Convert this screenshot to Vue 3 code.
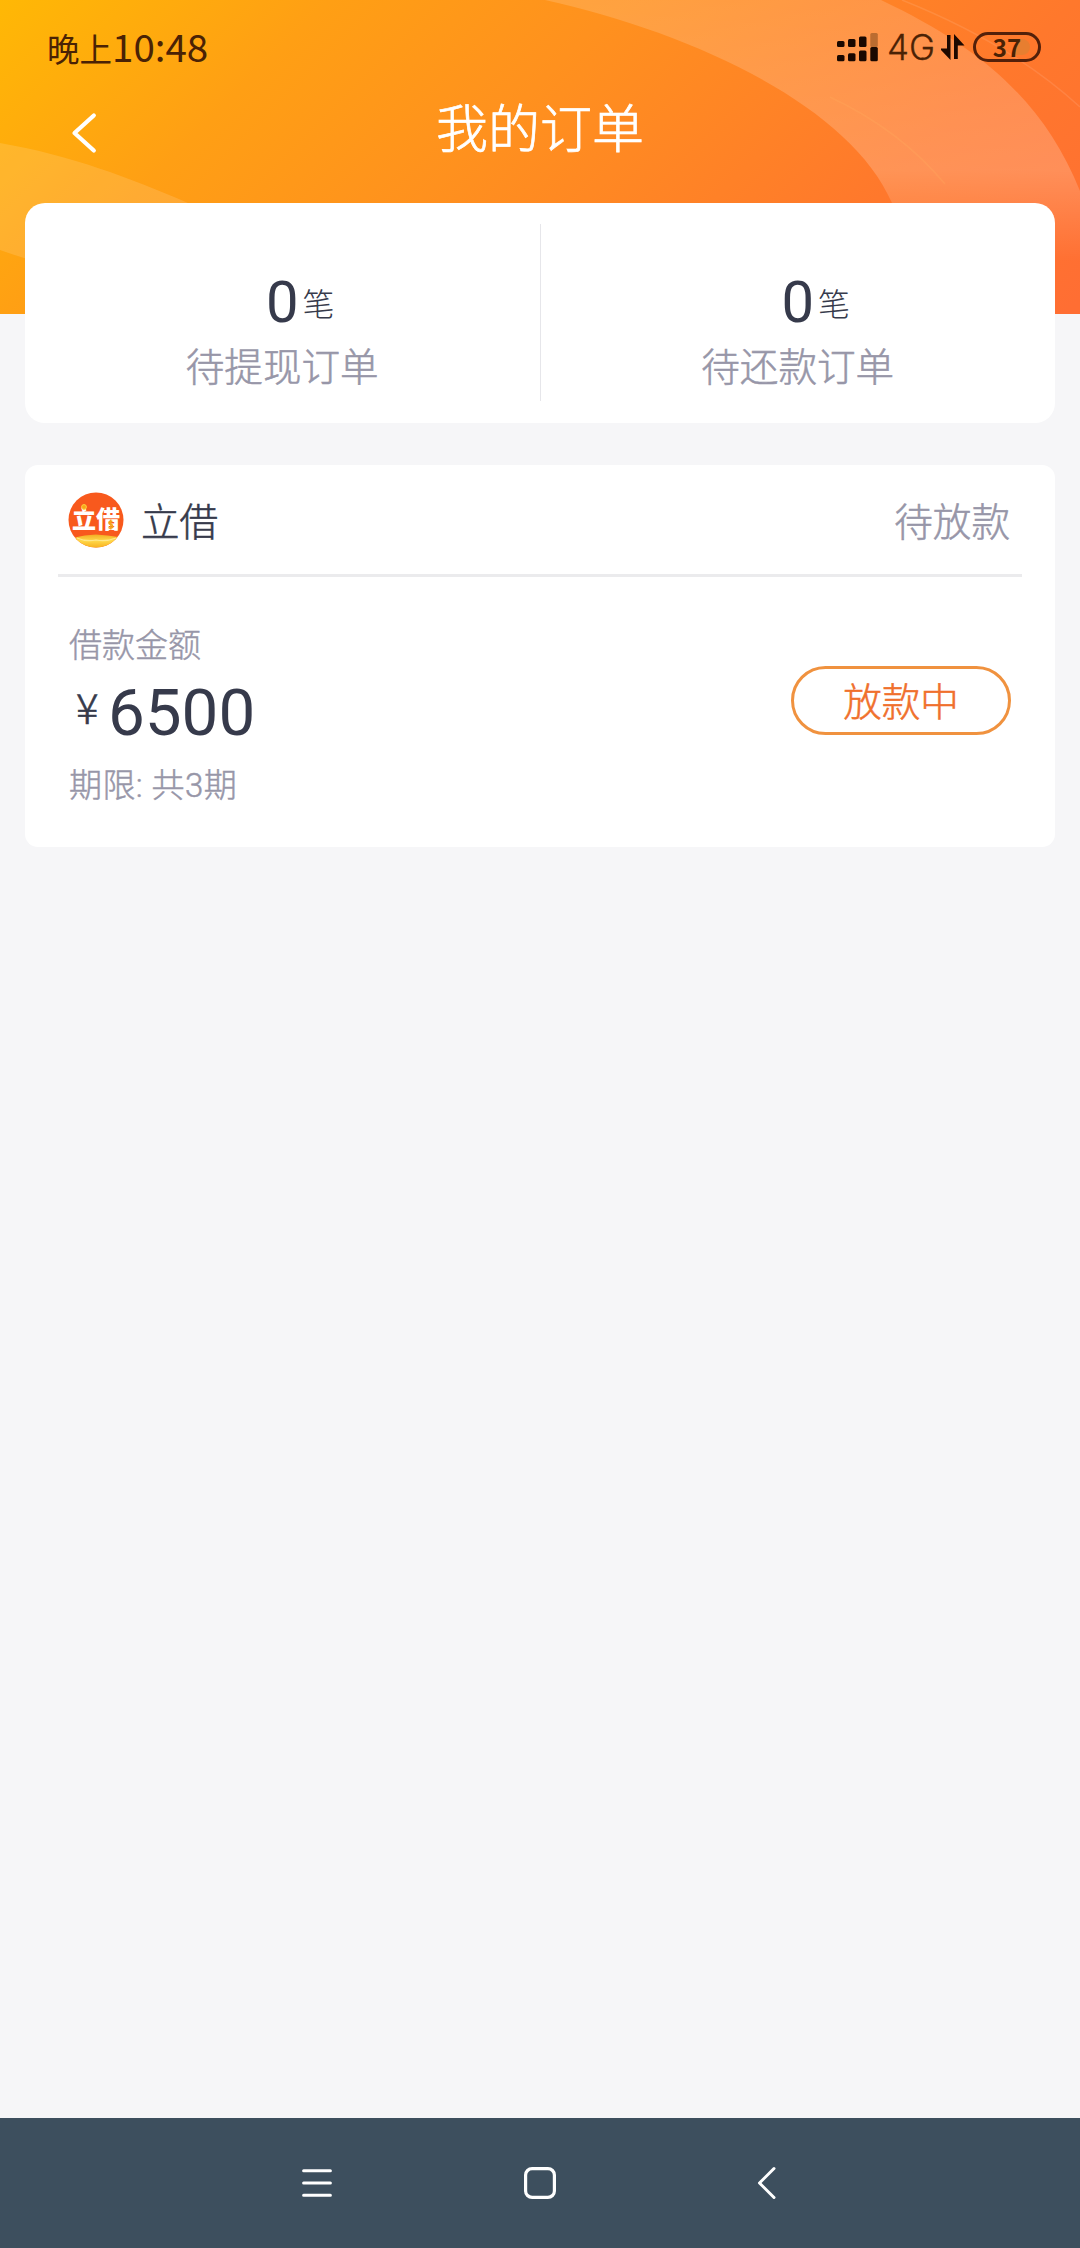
<script setup>
const stats = [
  { count: 0, unit: '笔', label: '待提现订单' },
  { count: 0, unit: '笔', label: '待还款订单' },
]

const order = {
  name: '立借',
  status: '待放款',
  amountLabel: '借款金额',
  amount: '6500',
  term: '期限: 共3期',
  action: '放款中',
}
</script>

<template>
  <div class="screen">
    <header class="hero">
      <svg class="hero-bg" width="1080" height="314" viewBox="0 0 1080 314" aria-hidden="true">
        <defs>
          <linearGradient id="base" gradientUnits="userSpaceOnUse" x1="0" y1="0" x2="690" y2="690">
            <stop offset="0" stop-color="#ffb805" />
            <stop offset="0.24" stop-color="#ff9f14" />
            <stop offset="0.45" stop-color="#ff911e" />
            <stop offset="0.78" stop-color="#ff782c" />
            <stop offset="1" stop-color="#ff6e33" />
          </linearGradient>
          <linearGradient id="band" gradientUnits="userSpaceOnUse" x1="0" y1="0" x2="0" y2="262">
            <stop offset="0" stop-color="#fff" stop-opacity="0.15" />
            <stop offset="0.65" stop-color="#fff" stop-opacity="0.2" />
            <stop offset="1" stop-color="#fff" stop-opacity="0" />
          </linearGradient>
        </defs>
        <rect width="1080" height="314" fill="url(#base)" />
        <path d="M545 0C690 32 850 105 892 203L905 314H1080V191C1044 102 982 48 881 0Z" fill="url(#band)" />
        <path d="M0 143C70 155 130 178 188 203V290Q90 282 0 250Z" fill="#fff" fill-opacity="0.13" />
        <path d="M902 0Q1010 43 1080 107" fill="none" stroke="#fff" stroke-opacity="0.1" stroke-width="1.5" />
        <path d="M830 97Q900 130 945 184" fill="none" stroke="#ffb060" stroke-opacity="0.25" stroke-width="1.5" />
      </svg>

      <div class="status-bar">
        <div class="time"><span class="period">晚上</span><span class="clock">10:48</span></div>
        <div class="indicators">
          <svg class="signal" width="42" height="30" viewBox="0 0 42 30">
            <g fill="#1a0800">
              <rect x="0" y="9" width="7.5" height="6" rx="1.5" />
              <rect x="11" y="7" width="7.5" height="8" rx="1.5" />
              <rect x="22" y="4.5" width="7.5" height="10.5" rx="1.5" />
              <rect x="0" y="23" width="7.5" height="6.3" rx="1.5" />
              <rect x="11" y="21.3" width="7.5" height="8" rx="1.5" />
              <rect x="22" y="18.5" width="7.5" height="10.8" rx="1.5" />
              <rect x="33.3" y="15" width="7.5" height="14.3" rx="1.5" />
            </g>
            <rect x="33.3" y="1" width="7.5" height="14" rx="1.5" fill="#bb6c30" />
          </svg>
          <span class="network">4G</span>
          <svg class="arrows" width="24" height="28" viewBox="0 0 24 28">
            <path d="M6 2H9.500V27L0 17V15.500H6Z M13 1L23.500 12.500H16.800V26H13Z" fill="#1d0900" />
          </svg>
          <div class="battery"><i class="charge"></i><span>37</span></div>
        </div>
      </div>

      <nav class="title-bar">
        <svg class="back" width="30" height="46" viewBox="0 0 30 46">
          <path d="M24.800 5.500L5.500 23L24.800 40.500" fill="none" stroke="#fff" stroke-width="4.2" stroke-linecap="round" stroke-linejoin="round" />
        </svg>
        <h1>我的订单</h1>
      </nav>
    </header>

    <main class="content">
      <section class="summary">
        <div v-for="s in stats" :key="s.label" class="stat">
          <div class="figure"><span class="count">{{ s.count }}</span><span class="unit">{{ s.unit }}</span></div>
          <div class="label">{{ s.label }}</div>
        </div>
      </section>

      <section class="order">
        <div class="order-head">
          <svg class="logo" width="56" height="56" viewBox="0 0 56 56">
            <defs>
              <clipPath id="disc"><circle cx="28" cy="28" r="27.500" /></clipPath>
              <linearGradient id="gold" x1="0" y1="0" x2="0" y2="1">
                <stop offset="0" stop-color="#f2ad23" />
                <stop offset="0.4" stop-color="#ffd84a" />
                <stop offset="1" stop-color="#f6a50f" />
              </linearGradient>
            </defs>
            <g clip-path="url(#disc)">
              <rect width="56" height="56" fill="#f8591d" />
              <path d="M7 45.500Q16 43 28 42.500Q40 43 50 45L46 58H12Z" fill="url(#gold)" />
              <path d="M9 46Q18 50 28 48Q38 50 48 46" fill="none" stroke="#ffe88a" stroke-width="1.200" />
            </g>
            <text x="28" y="36" text-anchor="middle" class="logo-text">立借</text>
            <circle cx="16" cy="15" r="2.400" fill="#f8a51b" stroke="#ffd33d" stroke-width="1" />
            <path d="M44.500 29.500Q41 28.500 41 30.500T43 32.500T44.500 35.500Q42.500 37 40.500 35.500M42.800 27.500V37.500" fill="none" stroke="#f6a31a" stroke-width="1.500" />
          </svg>
          <span class="name">{{ order.name }}</span>
          <span class="state">{{ order.status }}</span>
        </div>
        <div class="order-body">
          <div class="details">
            <div class="small">{{ order.amountLabel }}</div>
            <div class="amount"><span class="yen">¥</span><span class="number">{{ order.amount }}</span></div>
            <div class="small term">{{ order.term }}</div>
          </div>
          <button class="pill">{{ order.action }}</button>
        </div>
      </section>
    </main>

    <footer class="nav-keys">
      <svg width="36" height="40" viewBox="0 0 36 40">
        <path d="M4.600 7.800H31.400M4.600 20H31.400M4.600 32.200H31.400" stroke="#fff" stroke-width="3" stroke-linecap="round" />
      </svg>
      <svg width="36" height="40" viewBox="0 0 36 40">
        <rect x="3.600" y="5.600" width="28.800" height="28.800" rx="6.500" fill="none" stroke="#fff" stroke-width="3.200" />
      </svg>
      <svg class="key-back" width="36" height="40" viewBox="0 0 36 40">
        <path d="M25 5.500L10.500 20L25 34.500" fill="none" stroke="#fff" stroke-width="3" stroke-linecap="round" stroke-linejoin="round" />
      </svg>
    </footer>
  </div>
</template>

<style>
body {
  margin: 0;
  background: #f6f6f8;
}
</style>

<style scoped>
.screen {
  display: flex;
  flex-direction: column;
  width: 1080px;
  height: 2248px;
  overflow: hidden;
  background: #f6f6f8;
  font-family: Roboto, "Noto Sans CJK SC", sans-serif;
  font-weight: 300;
  color: #363a4b;
}
.title-bar h1,
.label,
.name,
.state,
.small,
.pill {
  -webkit-text-stroke: 0.014em currentColor;
}
.hero {
  position: relative;
  height: 314px;
  flex: none;
}
.hero-bg {
  position: absolute;
  inset: 0;
  z-index: 0;
}
.status-bar {
  position: relative;
  display: flex;
  align-items: center;
  justify-content: space-between;
  height: 94px;
  box-sizing: border-box;
  padding: 0 39px 0 47px;
  color: #4a2205;
}
.time {
  display: flex;
  align-items: baseline;
  padding-top: 2px;
  line-height: 44px;
  font-weight: 400;
}
.period {
  font-size: 32.5px;
}
.clock {
  font-family: "Noto Sans CJK SC", sans-serif;
  font-size: 38.5px;
  line-height: 44px;
}
.indicators {
  display: flex;
  align-items: center;
  height: 32px;
}
.network {
  margin-left: 8px;
  width: 50px;
  font: 300 35px/36px Inter, "Noto Sans", sans-serif;
  -webkit-text-stroke: 0.3px currentColor;
}
.arrows {
  margin: 0 8px 0 4px;
}
.battery {
  position: relative;
  width: 68px;
  height: 30px;
  box-sizing: border-box;
  border: 3.500px solid #53200a;
  border-radius: 16px;
  display: flex;
  align-items: center;
  justify-content: center;
  font: 700 24px/24px "Noto Sans CJK SC", sans-serif;
}
.battery span {
  position: relative;
}
.charge {
  position: absolute;
  left: 40px;
  top: 4px;
  width: 14px;
  height: 16px;
  border-radius: 0 8px 8px 0;
  background: #b98a3a;
  opacity: 0.35;
}
.title-bar {
  position: relative;
  display: flex;
  align-items: center;
  height: 74px;
  padding-left: 69px;
}
.back {
  margin-top: 3px;
}
.title-bar h1 {
  margin: 0 99px 0 0;
  flex: 1;
  text-align: center;
  font-size: 52px;
  line-height: 70px;
  font-weight: 300;
  color: #fff;
}
.content {
  position: relative;
  flex: 1;
  margin-top: -111px;
  padding: 0 25px;
}
.summary {
  display: flex;
  height: 220px;
  padding: 21px 0 22px;
  box-sizing: border-box;
  border-radius: 20px;
  background: #fff;
}
.stat {
  flex: 1;
  display: flex;
  flex-direction: column;
  align-items: center;
  padding-top: 43px;
}
.stat + .stat {
  border-left: 1px solid #e6e6ea;
}
.figure {
  display: flex;
  align-items: flex-start;
  height: 73px;
  line-height: 71px;
  padding-left: 36px;
}
.count {
  font-size: 58px;
  font-weight: 400;
}
.unit {
  margin-left: 4px;
  font: 300 32px/70px "Noto Sans CJK SC", sans-serif;
}
.label {
  height: 56px;
  font-size: 38.6px;
  line-height: 56px;
  color: #9796a8;
}
.order {
  height: 382px;
  margin-top: 42px;
  border-radius: 13px;
  background: #fff;
}
.order-head {
  display: flex;
  align-items: center;
  height: 112px;
  margin: 0 33px;
  padding: 1px 12px 0 10px;
  box-sizing: border-box;
  border-bottom: 3px solid #ebebed;
  font-size: 38.6px;
  line-height: 56px;
}
.logo-text {
  font: 900 24px "Noto Sans CJK SC", sans-serif;
  fill: #fff;
}
.name,
.state {
  margin-top: 5px;
}
.name {
  margin-left: 17px;
}
.state {
  margin-left: auto;
  color: #9796a8;
}
.order-body {
  display: flex;
  align-items: flex-start;
  justify-content: space-between;
  height: 270px;
  padding: 0 44px;
  box-sizing: border-box;
}
.details {
  padding-top: 45px;
}
.small {
  font-size: 33px;
  line-height: 48px;
  color: #9796a8;
}
.term {
  letter-spacing: 0.4px;
}
.amount {
  display: flex;
  align-items: flex-start;
  height: 92px;
}
.yen {
  width: 39px;
  padding-left: 7px;
  box-sizing: border-box;
  font: 300 42px/71px "Noto Sans CJK SC", sans-serif;
  -webkit-text-stroke: 0.6px currentColor;
}
.number {
  font-size: 65.500px;
  line-height: 85px;
  font-weight: 400;
}
.pill {
  width: 220px;
  height: 69px;
  margin-top: 89px;
  padding: 0 0 4px;
  border: 3px solid #f0923f;
  border-radius: 35px;
  background: #fff;
  font: 300 38.6px/56px "Noto Sans CJK SC", sans-serif;
  color: #f0702d;
}
.nav-keys {
  display: flex;
  align-items: center;
  justify-content: center;
  gap: 187px;
  height: 130px;
  padding-left: 4px;
  box-sizing: border-box;
  background: #3d4f5e;
}
.key-back {
  margin-left: 4px;
}
</style>
